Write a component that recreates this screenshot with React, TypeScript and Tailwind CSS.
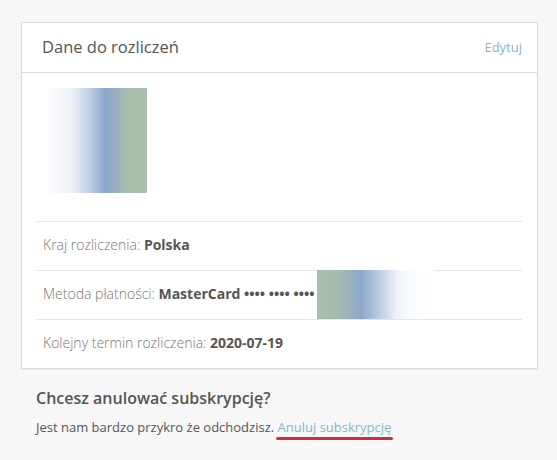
export default function App() {
  return (
    <div
      className="min-h-[460px] bg-[#f7f7f7] pl-[21px] pr-[19px] pt-[22px] text-[#555]"
      style={{ fontFamily: '"Open Sans", "Noto Sans", sans-serif' }}
    >
      <div className="border border-[#dcdcdc] bg-white shadow-[0_1px_2px_rgba(0,0,0,0.06)]">
        <div className="flex h-[50px] items-center justify-between border-b border-[#dcdcdc] pl-5 pr-[15px]">
          <h2 className="text-[16.5px] text-[#555]">Dane do rozliczeń</h2>
          <a className="text-[13px] text-[#86b7ca]">Edytuj</a>
        </div>
        <div className="px-[15px]">
          <div className="pb-[28px] pt-[15px]">
            <div className="ml-[10px] h-[105px] w-[100px] bg-[linear-gradient(90deg,#fdfdff_0%,#eef2f9_25%,#b9c8e0_45%,#8ba6cd_58%,#9cb3bd_72%,#a9c0ac_82%,#aabfae_100%)]" />
          </div>
          <div className="flex h-[49px] items-center border-t border-[#e6e6e6] px-[6px] pb-[4px] text-[14px]">
            <span className="font-light text-[#777]">Kraj rozliczenia:&nbsp;</span>
            <span className="font-bold text-[#555]">Polska</span>
          </div>
          <div className="relative flex h-[49px] items-center border-t border-[#e6e6e6] px-[6px] pb-[4px] text-[14px]">
            <span className="font-light text-[#777]">Metoda płatności:&nbsp;</span>
            <span className="font-bold text-[#555]">MasterCard •••• •••• ••••</span>
            <span className="absolute left-[280px] top-[-1px] h-[49px] w-[117px] bg-[linear-gradient(90deg,#a9bfac_0%,#a3baaf_20%,#8ea8cc_38%,#c2cfe4_55%,#eef2f9_68%,#fbfcfe_80%,#ffffff_100%)]" />
          </div>
          <div className="flex h-[49px] items-center border-t border-[#e6e6e6] px-[6px] pb-[4px] text-[14px]">
            <span className="font-light text-[#777]">Kolejny termin rozliczenia:&nbsp;</span>
            <span className="font-bold text-[#555]">2020-07-19</span>
          </div>
        </div>
      </div>
      <div className="pl-[15px] pt-[17px]">
        <h3 className="text-[16px] font-semibold leading-[24px] text-[#555]">
          Chcesz anulować subskrypcję?
        </h3>
        <p className="mt-[8px] text-[13px] leading-[18px] text-[#555]">
          Jest nam bardzo przykro że odchodzisz.{' '}
          <a className="relative text-[#86b7ca]">
            Anuluj subskrypcję
            <span className="absolute -bottom-[4px] left-[-2px] right-[-2px] h-[3px] rounded-full bg-[#c8313a]" />
          </a>
        </p>
      </div>
    </div>
  );
}
